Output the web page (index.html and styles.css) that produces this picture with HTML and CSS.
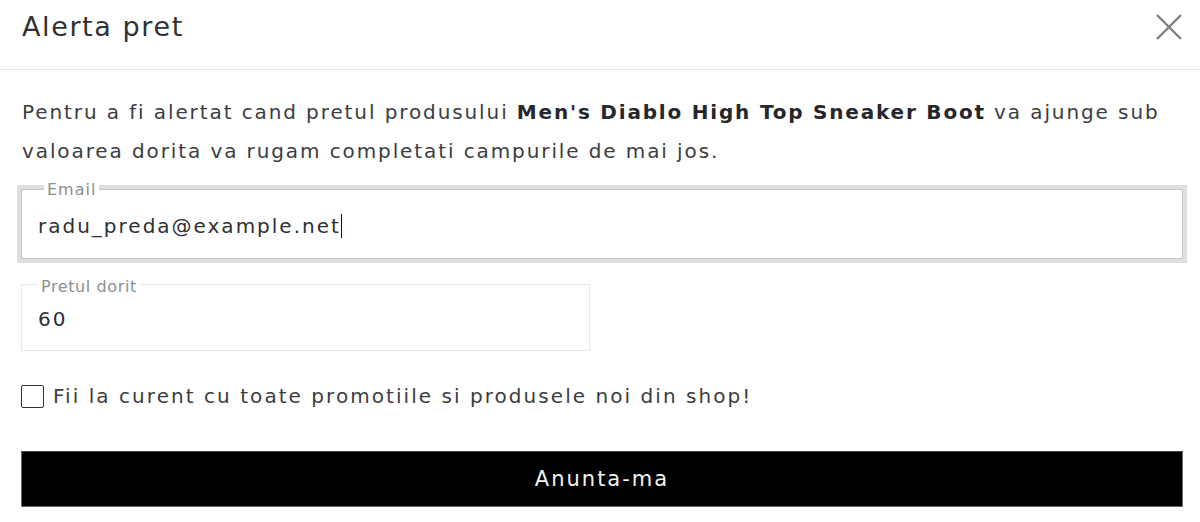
FILE: index.html
```html
<!DOCTYPE html>
<html lang="ro">
<head>
<meta charset="utf-8">
<title>Alerta pret</title>
<link rel="stylesheet" href="styles.css">
</head>
<body>
<div class="modal">
  <header class="modal-header">
    <h2 class="modal-title">Alerta pret</h2>
    <button class="close" aria-label="Inchide">
      <svg width="28" height="28" viewBox="0 0 28 28"><path d="M2 2 L26 26 M26 2 L2 26" stroke="#7a7a7a" stroke-width="2.2" fill="none"/></svg>
    </button>
  </header>
  <div class="modal-body">
    <p class="intro">Pentru a fi alertat cand pretul produsului <strong>Men's Diablo High Top Sneaker Boot</strong> va ajunge sub valoarea dorita va rugam completati campurile de mai jos.</p>
    <fieldset class="field field-email">
      <legend>Email</legend>
      <div class="value">radu_preda@example.net<span class="caret"></span></div>
    </fieldset>
    <fieldset class="field field-price">
      <legend>Pretul dorit</legend>
      <div class="value">60</div>
    </fieldset>
    <label class="check">
      <span class="box"></span>
      <span class="check-text">Fii la curent cu toate promotiile si produsele noi din shop!</span>
    </label>
    <button class="submit">Anunta-ma</button>
  </div>
</div>
</body>
</html>
```
FILE: styles.css
```css
* { box-sizing: border-box; }
html, body { margin: 0; padding: 0; background: #fff; }
body {
  font-family: "DejaVu Sans", "Open Sans", sans-serif;
  color: #3b3d40;
  width: 1200px;
  height: 522px;
  overflow: hidden;
}
.modal-header {
  height: 70px;
  border-bottom: 1px solid #e5e6e8;
  display: flex;
  align-items: center;
  justify-content: space-between;
  padding: 0 17px 16px 22px;
}
.modal-title {
  margin: 0;
  font-size: 27px;
  font-weight: normal;
  letter-spacing: 1.6px;
  color: #2f3134;
}
.close {
  border: 0;
  background: none;
  padding: 0;
  width: 28px;
  height: 28px;
  display: flex;
}
.modal-body {
  padding: 0 17px 0 21px;
  display: flex;
  flex-direction: column;
}
.intro {
  margin: 23px 0 0 1px;
  font-size: 20px;
  line-height: 39px;
  letter-spacing: 1.9px;
  color: #3b3d40;
}
.intro strong {
  color: #25272a;
  letter-spacing: 1.8px;
}
.field {
  margin: 0;
  padding: 0 0 0 16px;
  min-width: 0;
}
.field legend {
  font-size: 16px;
  line-height: 16px;
  color: #8a8f95;
  padding: 6px 3px 0;
  letter-spacing: 1px;
}
.value {
  font-size: 20px;
  letter-spacing: 2px;
  color: #2e3033;
  display: flex;
  align-items: center;
}
.field-email {
  margin: 5px -4px 0;
  border: 4px solid #dcdee0;
  box-shadow: inset 0 0 0 1px #c4c7cb;
  padding-left: 17px;
  height: 87px;
}
.field-email legend {
  margin-left: 6px;
  background: #fff;
}
.field-email .value { height: 56px; }
.caret {
  display: inline-block;
  width: 1px;
  height: 24px;
  background: #111;
}
.field-price {
  margin-top: 10px;
  width: 569px;
  border: 1px solid #e6e7e8;
  height: 78px;
  padding-left: 16px;
}
.field-price legend { margin-left: 0; letter-spacing: 0.6px; }
.field-price .value { height: 48px; }
.check {
  margin-top: 33px;
  height: 24px;
  display: flex;
  align-items: center;
  gap: 9px;
  font-size: 20px;
  letter-spacing: 2.05px;
  color: #3b3d40;
}
.box {
  width: 23px;
  height: 23px;
  border: 1px solid #333;
  border-radius: 2px;
  flex: none;
}
.submit {
  margin-top: 43px;
  height: 56px;
  width: 100%;
  background: #000;
  border: 1px solid #6b6b6b;
  border-top-color: #444;
  color: #f2f2f2;
  font-family: "DejaVu Sans", "Open Sans", sans-serif;
  font-size: 21px;
  letter-spacing: 2px;
}
```
